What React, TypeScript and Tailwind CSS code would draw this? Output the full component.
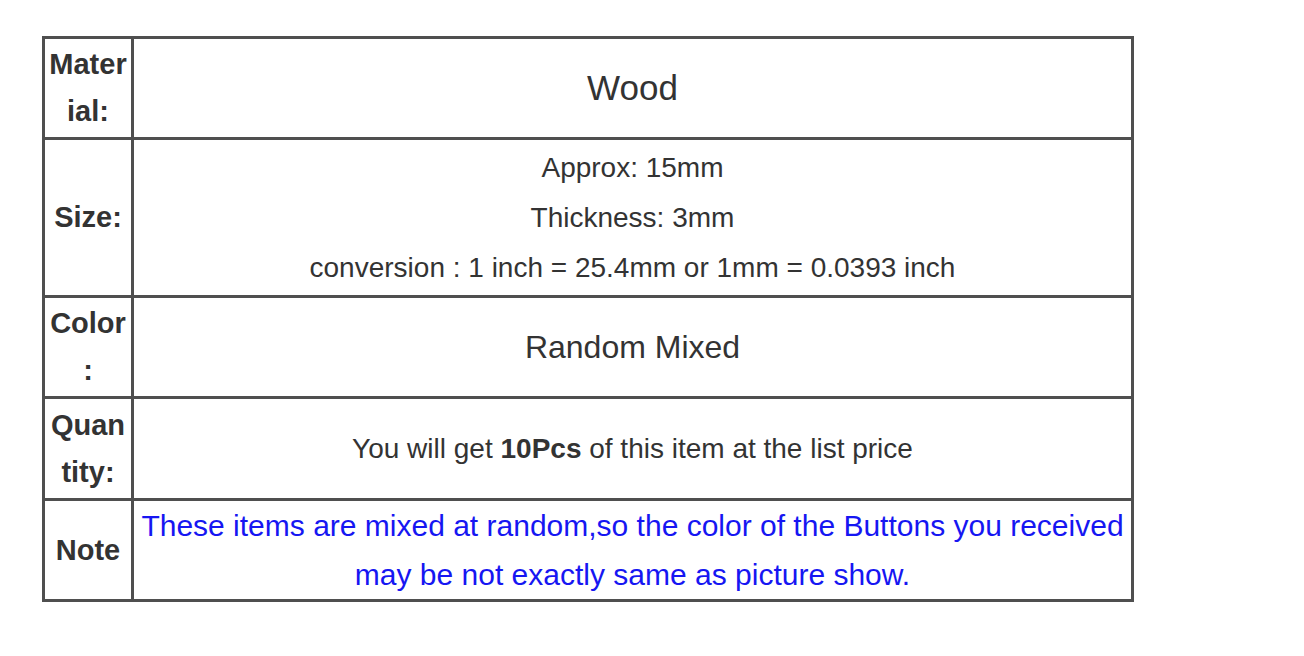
function Label({ children }: { children: React.ReactNode }) {
  return (
    <td className="w-[89px] border-[3px] border-[#4f4f4f] p-0 text-center align-middle text-[29px] font-bold leading-[47px] text-[#333]">
      {children}
    </td>
  )
}

function Cell({ children, className = "" }: { children: React.ReactNode; className?: string }) {
  return (
    <td className={`border-[3px] border-[#4f4f4f] p-0 text-center align-middle text-[#333] ${className}`}>
      {children}
    </td>
  )
}

export default function App() {
  return (
    <div className="min-h-[656px] bg-white pl-[42px] pt-[36px] font-['Liberation_Sans',Arial,sans-serif]">
      <table className="w-[1092px] border-collapse border-[3px] border-[#4f4f4f]">
        <tbody>
          <tr className="h-[101px]">
            <Label>
              Mater
              <br />
              ial:
            </Label>
            <Cell className="text-[35px]">Wood</Cell>
          </tr>
          <tr className="h-[158px]">
            <Label>Size:</Label>
            <Cell className="text-[28px] leading-[50px]">
              <div>Approx: 15mm</div>
              <div>Thickness: 3mm</div>
              <div>conversion : 1 inch = 25.4mm or 1mm = 0.0393 inch</div>
            </Cell>
          </tr>
          <tr className="h-[101px]">
            <Label>
              Color
              <br />:
            </Label>
            <Cell className="text-[32px]">Random Mixed</Cell>
          </tr>
          <tr className="h-[102px]">
            <Label>
              Quan
              <br />
              tity:
            </Label>
            <Cell className="text-[28px]">
              You will get <b>10Pcs</b> of this item at the list price
            </Cell>
          </tr>
          <tr className="h-[101px]">
            <Label>Note</Label>
            <Cell className="text-[30px] leading-[49px] text-[#1616f2]">
              These items are mixed at random,so the color of the Buttons you received may be not exactly same as
              picture show.
            </Cell>
          </tr>
        </tbody>
      </table>
    </div>
  )
}
